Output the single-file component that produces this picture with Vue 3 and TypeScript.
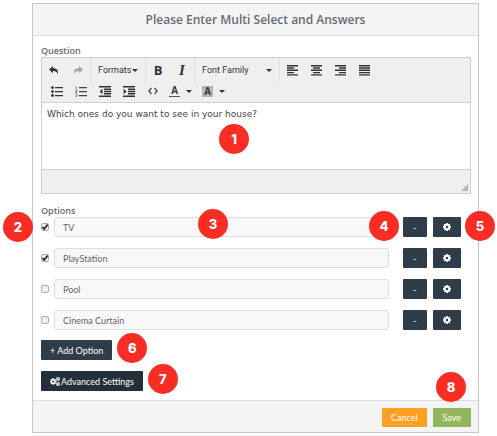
<script setup lang="ts">
import { ref } from 'vue'

interface Option {
  label: string
  checked: boolean
}

interface Tool {
  name: string
  icon: string
}

const question = ref('Which ones do you want to see in your house?')
const options = ref<Option[]>([
  { label: 'TV', checked: true },
  { label: 'PlayStation', checked: true },
  { label: 'Pool', checked: false },
  { label: 'Cinema Curtain', checked: false },
])

const alignTools: Tool[] = [
  { name: 'Align left', icon: 'M0 0h11v1.5H0zM0 2.3h7v1.4H0zM0 4.6h11v1.4H0zM0 6.9h7v1.4H0zM0 9.2h11v1.4H0z' },
  { name: 'Align center', icon: 'M0 0h11v1.5H0zM2 2.3h7v1.4H2zM0 4.6h11v1.4H0zM2 6.9h7v1.4H2zM0 9.2h11v1.4H0z' },
  { name: 'Align right', icon: 'M0 0h11v1.5H0zM4 2.3h7v1.4H4zM0 4.6h11v1.4H0zM4 6.9h7v1.4H4zM0 9.2h11v1.4H0z' },
  { name: 'Justify', icon: 'M0 0h11v1.5H0zM0 2.3h11v1.4H0zM0 4.6h11v1.4H0zM0 6.9h11v1.4H0zM0 9.2h11v1.4H0z' },
]

const gear =
  'M6.3 0h3.4l.4 2 1.200.5L13 1.300 14.700 3l-1.200 1.700.5 1.200 2 .4v3.400l-2 .4-.5 1.200 1.200 1.700L13 14.700l-1.700-1.200-1.200.5-.4 2H6.300l-.4-2-1.200-.5L3 14.700 1.300 13l1.200-1.700-.5-1.200-2-.4V6.300l2-.4.5-1.200L1.300 3 3 1.300l1.700 1.200 1.200-.5zM8 5.400a2.600 2.600 0 1 0 0 5.200 2.600 2.600 0 0 0 0-5.200z'

function addOption(): void {
  options.value.push({ label: '', checked: false })
}

function removeOption(index: number): void {
  options.value.splice(index, 1)
}
</script>

<template>
  <main class="dialog">
    <header class="head">
      <h1>Please Enter Multi Select and Answers</h1>
    </header>

    <div class="body">
      <label class="caption" for="question">Question</label>
      <div class="editor">
        <div class="toolbar">
          <div class="tools">
            <div class="group">
              <button class="tool" type="button" aria-label="Undo">
                <svg width="10" height="9" viewBox="0 0 10 9"><path fill="#333" d="M4 0v2.200c3.800 0 5.800 2 4.800 6.300C8.400 6 7 5 4 5v2.200L0 3.600z" /></svg>
              </button>
              <button class="tool" type="button" aria-label="Redo">
                <svg width="10" height="9" viewBox="0 0 10 9"><path fill="#a5a5a5" d="M6 0v2.200C2.200 2.200.2 4.200 1.200 8.500 1.600 6 3 5 6 5v2.200l4-3.600z" /></svg>
              </button>
            </div>
            <div class="group">
              <span class="picker">
                <select class="formats" aria-label="Formats"><option>Formats</option></select>
                <i class="caret"></i>
              </span>
            </div>
            <div class="group">
              <button class="tool bold" type="button" aria-label="Bold">B</button>
              <button class="tool italic" type="button" aria-label="Italic">I</button>
            </div>
            <div class="group">
              <span class="picker">
                <select class="family" aria-label="Font family"><option>Font Family</option></select>
                <i class="caret"></i>
              </span>
            </div>
            <div class="group">
              <button v-for="tool in alignTools" :key="tool.name" class="tool" type="button" :aria-label="tool.name">
                <svg width="11" height="11" viewBox="0 0 11 11"><path fill="#333" :d="tool.icon" /></svg>
              </button>
            </div>
          </div>
          <div class="tools second">
            <button class="tool" type="button" aria-label="Bullet list">
              <svg width="12" height="11" viewBox="0 0 12 11"><path fill="#333" d="M4 1h8v1.300H4zM4 5h8v1.300H4zM4 9h8v1.300H4z" /><circle cx="1.500" cy="1.600" r="1.400" fill="#333" /><circle cx="1.500" cy="5.600" r="1.400" fill="#333" /><circle cx="1.500" cy="9.500" r="1.400" fill="#333" /></svg>
            </button>
            <button class="tool" type="button" aria-label="Numbered list">
              <svg width="12" height="11" viewBox="0 0 12 11"><path fill="#444" d="M4 1h8v1.300H4zM4 5h8v1.300H4zM4 9h8v1.300H4z" /><path fill="none" stroke="#777" stroke-width=".8" d="M.6.6h.8v2.600M.4 4.200h1.600v1.200H.6v1.200h1.600M.4 7.800h1.600v2.800H.4M.8 9.200H2" /></svg>
            </button>
            <button class="tool" type="button" aria-label="Decrease indent">
              <svg width="12" height="11" viewBox="0 0 12 11"><path fill="#333" d="M0 0h12v1.500H0zM5 2.400h7v1.500H5zM5 4.800h7v1.400H5zM5 7.100h7v1.500H5zM0 9.500h12V11H0zM3.500 2.800v5.400L.6 5.500z" /></svg>
            </button>
            <button class="tool" type="button" aria-label="Increase indent">
              <svg width="12" height="11" viewBox="0 0 12 11"><path fill="#333" d="M0 0h12v1.500H0zM5 2.400h7v1.500H5zM5 4.800h7v1.400H5zM5 7.100h7v1.500H5zM0 9.500h12V11H0zM.6 2.800v5.400l2.900-2.700z" /></svg>
            </button>
            <button class="tool" type="button" aria-label="Source code">
              <svg width="10" height="8" viewBox="0 0 10 8"><path fill="none" stroke="#444" stroke-width="1.200" d="M3.500 1L.9 4l2.600 3M6.500 1l2.600 3-2.600 3" /></svg>
            </button>
            <button class="color" type="button" aria-label="Text color">
              <span class="glyph underlined">A</span><i class="caret"></i>
            </button>
            <button class="color" type="button" aria-label="Background color">
              <span class="glyph filled">A</span><i class="caret"></i>
            </button>
          </div>
        </div>
        <div class="writing">
          <textarea id="question" v-model="question"></textarea>
          <span class="badge on-question">1</span>
        </div>
        <div class="status">
          <svg width="7" height="7" viewBox="0 0 7 7"><path fill="#b5b5b5" d="M7 0v7H0z" /></svg>
        </div>
      </div>

      <section class="options" aria-labelledby="options-title">
        <h2 id="options-title" class="caption">Options</h2>
        <ul>
          <li v-for="(option, index) in options" :key="index">
            <span class="tick">
              <input v-model="option.checked" type="checkbox" :aria-label="`Select option ${index + 1}`" />
              <svg v-if="option.checked" width="8" height="8" viewBox="0 0 8 8"><path fill="none" stroke="#222" stroke-width="1.700" d="M1.400 4l1.800 2L6.700 1.400" /></svg>
              <span v-if="index === 0" class="badge on-tick">2</span>
            </span>
            <span class="field">
              <input v-model="option.label" type="text" :aria-label="`Option ${index + 1}`" />
              <span v-if="index === 0" class="badge on-field">3</span>
            </span>
            <span class="action">
              <button class="dark remove" type="button" :aria-label="`Remove option ${index + 1}`" @click="removeOption(index)">-</button>
              <span v-if="index === 0" class="badge on-remove">4</span>
            </span>
            <span class="action">
              <button class="dark settings" type="button" :aria-label="`Settings of option ${index + 1}`">
                <svg width="8" height="8" viewBox="0 0 16 16"><path fill="#fff" fill-rule="evenodd" :d="gear" /></svg>
              </button>
              <span v-if="index === 0" class="badge on-settings">5</span>
            </span>
          </li>
        </ul>
      </section>

      <div class="extras">
        <span class="action">
          <button class="dark" type="button" @click="addOption">+ Add Option</button>
          <span class="badge on-extra">6</span>
        </span>
        <span class="action">
          <button class="dark advanced" type="button">
            <svg width="10" height="9" viewBox="0 0 30 27">
              <path fill="#fff" fill-rule="evenodd" transform="translate(0 4) scale(1.200)" :d="gear" />
              <path fill="#fff" fill-rule="evenodd" transform="translate(18 0) scale(.75)" :d="gear" />
              <path fill="#fff" fill-rule="evenodd" transform="translate(18 15) scale(.75)" :d="gear" />
            </svg>
            Advanced Settings
          </button>
          <span class="badge on-extra">7</span>
        </span>
      </div>
    </div>

    <footer class="foot">
      <button class="cancel" type="button">Cancel</button>
      <span class="action">
        <button class="save" type="button">Save</button>
        <span class="badge on-save">8</span>
      </span>
    </footer>
  </main>
</template>

<style>
body {
  background: #fff;
}
</style>

<style scoped>
* {
  box-sizing: border-box;
}

.dialog {
  margin: 3px 18px 3px 32px;
  border: 1px solid #c6c6c6;
  background: #fff;
  color: #646b76;
  font-family: Lato, 'Open Sans', sans-serif;
  font-size: 9px;
}

button,
input,
select,
textarea {
  margin: 0;
  padding: 0;
  border: 0;
  background: none;
  color: inherit;
  font: inherit;
}

svg {
  display: block;
  flex: none;
}

.head {
  padding: 7px;
  border-bottom: 1px solid #dcdcdc;
  background: #f4f4f4;
}

h1 {
  margin: 0;
  font-family: 'Open Sans', 'Noto Sans', sans-serif;
  font-size: 12px;
  font-weight: 600;
  line-height: 17px;
  text-align: center;
}

.body {
  padding: 8px 7px 9px 8px;
}

.caption {
  display: block;
  margin: 0;
  font-family: 'Open Sans', 'Noto Sans', sans-serif;
  font-size: 9px;
  font-weight: 600;
  line-height: 13px;
}

.editor {
  border: 1px solid #cfcfcf;
}

.toolbar {
  display: flex;
  flex-direction: column;
  height: 45px;
  border-bottom: 1px solid #cfcfcf;
  background: #efefef;
  color: #333;
}

.tools {
  display: flex;
  align-items: center;
  height: 24px;
}

.second {
  height: 18px;
  padding-left: 3px;
}

.group {
  display: flex;
  align-items: center;
  height: 24px;
}

.group + .group {
  border-left: 1px solid #e0e0e0;
}

.tool {
  display: flex;
  align-items: center;
  justify-content: center;
  width: 24px;
  height: 18px;
}

.bold {
  font-family: 'Open Sans', sans-serif;
  font-size: 13px;
  font-weight: 700;
}

.italic {
  font-family: 'Liberation Serif', serif;
  font-size: 15px;
  font-style: italic;
  font-weight: 700;
}

.picker {
  display: flex;
  align-items: center;
  padding: 0 7px;
}

.picker select {
  appearance: none;
  font-family: Roboto, 'Liberation Sans', sans-serif;
  font-size: 9px;
  line-height: 14px;
}

.formats {
  width: 34px;
}

.family {
  width: 64px;
}

.caret {
  flex: none;
  border: 3px solid transparent;
  border-top-color: #333;
  border-bottom: 0;
}

.color {
  display: flex;
  align-items: center;
  gap: 6px;
  width: 33px;
  padding-left: 4px;
}

.glyph {
  width: 11px;
  height: 11px;
  font-family: 'Liberation Sans', sans-serif;
  font-size: 10px;
  font-weight: 700;
  line-height: 11px;
  text-align: center;
}

.underlined {
  border-bottom: 1px solid #555;
  line-height: 10px;
}

.filled {
  background: #b5b5b5;
}

.writing {
  position: relative;
}

textarea {
  display: block;
  width: 100%;
  height: 66px;
  padding: 4px 5px;
  outline: 0;
  resize: none;
  color: #444;
  font-family: 'DejaVu Sans', sans-serif;
  font-size: 9px;
  line-height: 14px;
}

.status {
  display: flex;
  align-items: flex-end;
  justify-content: flex-end;
  height: 24px;
  padding: 2px;
  border-top: 1px solid #cfcfcf;
  background: #efefef;
}

.options {
  padding-top: 10px;
}

ul {
  display: grid;
  gap: 11px;
  margin: 0;
  padding: 0 10px 0 0;
  list-style: none;
}

li {
  display: flex;
  height: 20px;
}

.tick {
  position: relative;
  display: grid;
  align-self: center;
  width: 13px;
}

.tick input,
.tick svg {
  grid-area: 1 / 1;
  width: 8px;
  height: 8px;
}

.tick svg {
  pointer-events: none;
  position: relative;
}

.tick input {
  appearance: none;
  border: 1px solid #adadad;
  border-radius: 2px;
  background: #efefef;
}

.field {
  position: relative;
  flex: 1;
  margin-right: 14px;
}

.field input {
  display: block;
  width: 100%;
  height: 20px;
  padding: 0 8px;
  border: 1px solid #dedede;
  border-radius: 3px;
  background: #f8f8f8;
  color: #666;
}

.action {
  position: relative;
  display: flex;
}

.dark {
  display: flex;
  align-items: center;
  justify-content: center;
  height: 20px;
  padding: 0 9px;
  border-radius: 1px;
  background: #2f3d4a;
  color: #fff;
}

.remove {
  width: 24px;
  margin-right: 6px;
}

.settings {
  width: 28px;
}

.extras {
  display: flex;
  flex-direction: column;
  align-items: flex-start;
  gap: 11px;
  padding-top: 10px;
}

.advanced {
  gap: 1px;
  background: #232f3a;
}

.foot {
  display: flex;
  justify-content: flex-end;
  gap: 6px;
  padding: 7px 7px 5px;
  border-top: 1px solid #dcdcdc;
  background: #f4f4f4;
}

.cancel,
.save {
  height: 19px;
  padding: 0 9px;
  border-radius: 1px;
  color: #fff;
}

.cancel {
  background: #ffa024;
}

.save {
  padding: 0 10px;
  background: #93b75c;
}

.badge {
  position: absolute;
  z-index: 1;
  width: 30px;
  height: 30px;
  border-radius: 50%;
  background: #fa2d25;
  color: #fff;
  font-family: Inter, sans-serif;
  font-size: 13px;
  font-weight: 800;
  line-height: 30px;
  text-align: center;
  pointer-events: none;
}

.on-question {
  top: 21px;
  left: 177px;
}

.on-tick {
  top: -11px;
  left: -38px;
}

.on-field {
  top: -8px;
  left: 144px;
}

.on-remove {
  top: -6px;
  right: 34px;
}

.on-settings {
  top: -6px;
  left: 32px;
}

.on-extra {
  top: -7px;
  left: calc(100% + 5px);
}

.on-save {
  right: 5px;
  bottom: 25px;
}
</style>
